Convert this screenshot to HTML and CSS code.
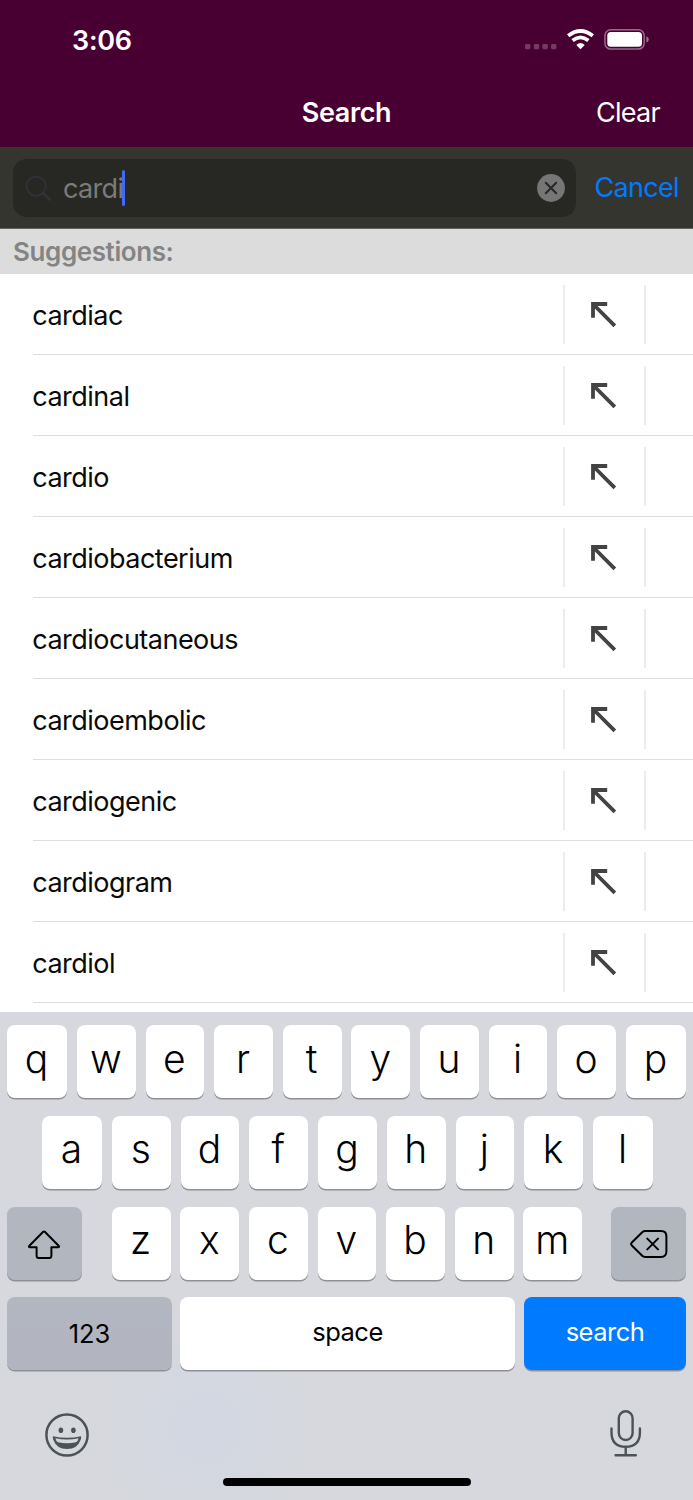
FILE: index.html
```
<!DOCTYPE html>
<html lang="en">
<head>
<meta charset="utf-8">
<title>Search</title>
<link rel="stylesheet" href="styles.css">
</head>
<body>
<svg class="defs" aria-hidden="true">
  <symbol id="insert" viewBox="0 0 26 26"><path d="M2 15.800V2H16.200M2 2L23.800 23.800" fill="none" stroke="#434343" stroke-width="3.800"/></symbol>
</svg>
<header class="header">
  <div class="status">
    <span class="time">3:06</span>
    <svg class="status-icons" viewBox="0 0 126 24" width="126" height="24">
      <g fill="#fff" fill-opacity=".23"><rect y="16" width="5.4" height="5.2" rx="1.4"/><rect x="8.8" y="16" width="5.4" height="5.2" rx="1.4"/><rect x="17.4" y="16" width="5.4" height="5.2" rx="1.4"/><rect x="26" y="16" width="5.4" height="5.2" rx="1.4"/></g>
      <g fill="none" stroke="#fff" stroke-width="3.7"><path d="M43.2 7.7Q55.5-1.7 67.8 7.7"/><path d="M47.6 12.5Q55.5 6.3 63.4 12.5"/></g>
      <path d="M55.5 21.2L51.3 17Q55.5 13.2 59.7 17Z" fill="#fff"/>
      <rect x="79.9" y="1.8" width="39.3" height="19.3" rx="5.8" fill="none" stroke="#fff" stroke-opacity=".42" stroke-width="1.5"/>
      <rect x="82.3" y="4" width="34.7" height="14.8" rx="3.6" fill="#fff"/>
      <path d="M121.3 8.2Q123.8 9.2 123.8 11.4T121.3 14.6Z" fill="#fff" fill-opacity=".45"/>
    </svg>
  </div>
  <nav class="nav"><span></span><h1 class="title">Search</h1><span class="clear">Clear</span></nav>
</header>
<div class="searchbar">
  <div class="field">
    <svg class="magnifier" width="27" height="27" viewBox="0 0 27 27"><g fill="none" stroke="#32323a" stroke-linecap="round"><circle cx="11.2" cy="11.2" r="9.6" stroke-width="1.8"/><path d="M18.3 18.3L24.6 24.6" stroke-width="2.5"/></g></svg>
    <span class="query">cardi</span><span class="caret"></span>
    <svg class="reset" width="28" height="28" viewBox="0 0 28 28"><circle cx="14" cy="14" r="13.9" fill="#767676"/><path d="M8.8 8.8L19.2 19.2M19.2 8.8L8.8 19.2" stroke="#272824" stroke-width="2" stroke-linecap="round"/></svg>
  </div>
  <span class="cancel">Cancel</span>
</div>
<h2 class="section">Suggestions:</h2>
<ul class="list">
  <li class="row"><span class="word">cardiac</span><span class="insert"><svg><use href="#insert"/></svg></span></li>
  <li class="row"><span class="word">cardinal</span><span class="insert"><svg><use href="#insert"/></svg></span></li>
  <li class="row"><span class="word">cardio</span><span class="insert"><svg><use href="#insert"/></svg></span></li>
  <li class="row"><span class="word">cardiobacterium</span><span class="insert"><svg><use href="#insert"/></svg></span></li>
  <li class="row"><span class="word">cardiocutaneous</span><span class="insert"><svg><use href="#insert"/></svg></span></li>
  <li class="row"><span class="word">cardioembolic</span><span class="insert"><svg><use href="#insert"/></svg></span></li>
  <li class="row"><span class="word">cardiogenic</span><span class="insert"><svg><use href="#insert"/></svg></span></li>
  <li class="row"><span class="word">cardiogram</span><span class="insert"><svg><use href="#insert"/></svg></span></li>
  <li class="row"><span class="word">cardiol</span><span class="insert"><svg><use href="#insert"/></svg></span></li>
</ul>
<section class="keyboard">
  <div class="keys"><span class="key edge">q</span><span class="key">w</span><span class="key">e</span><span class="key">r</span><span class="key">t</span><span class="key">y</span><span class="key">u</span><span class="key">i</span><span class="key">o</span><span class="key edge">p</span></div>
  <div class="keys inset"><span class="key edge">a</span><span class="key">s</span><span class="key">d</span><span class="key">f</span><span class="key">g</span><span class="key">h</span><span class="key">j</span><span class="key">k</span><span class="key edge">l</span></div>
  <div class="keys">
    <span class="key dark shift"><svg width="34" height="30" viewBox="0 0 34 30"><path d="M16.2 1.8Q17 1 17.8 1.8L31.6 15.7Q32.7 17.2 31 17.2H24.4V25.8Q24.4 28 22.2 28H11.8Q9.6 28 9.6 25.8V17.2H3Q1.3 17.2 2.4 15.7Z" fill="none" stroke="#000" stroke-width="2" stroke-linejoin="round"/></svg></span>
    <div class="letters"><span class="key">z</span><span class="key">x</span><span class="key">c</span><span class="key">v</span><span class="key">b</span><span class="key">n</span><span class="key">m</span></div>
    <span class="key dark delete"><svg width="38" height="28" viewBox="0 0 38 28"><path d="M15.2 1H31Q36.4 1 36.4 6.4V21.6Q36.4 27 31 27H15.2Q13.5 27 12.2 25.8L1.6 15.2Q.6 14 1.6 12.8L12.2 2.2Q13.5 1 15.2 1ZM17.3 8.6L28 19.4M28 8.6L17.3 19.4" fill="none" stroke="#000" stroke-width="2" stroke-linecap="round" stroke-linejoin="round"/></svg></span>
  </div>
  <div class="keys"><span class="key label numbers">123</span><span class="key label space">space</span><span class="key label go">search</span></div>
  <div class="dock">
    <svg class="emoji" width="44" height="44" viewBox="0 0 44 44"><circle cx="22" cy="22" r="20.6" fill="none" stroke="#4b5357" stroke-width="2.5"/><ellipse cx="15.9" cy="17.2" rx="2.3" ry="2.8" fill="#4b5357"/><ellipse cx="28.4" cy="17.2" rx="2.3" ry="2.8" fill="#4b5357"/><path d="M8 23.2Q22 26.2 36 23.2Q36.500 24 35.800 26.400Q32.500 36 22 36Q11.500 36 8.200 26.400Q7.500 24 8 23.200Z" fill="#4b5357"/><path d="M10.400 25.200Q22 27.600 33.600 25.200Q33 28.200 31 29.200Q22 31.200 13 29.200Q11 28.200 10.400 25.200Z" fill="#d5d7dd"/></svg>
    <svg width="32" height="47" viewBox="0 0 32 47"><g fill="none" stroke="#4b5357" stroke-width="2.4" stroke-linecap="round"><rect x="8.800" y="1.300" width="13.800" height="28.700" rx="6.900"/><path d="M1.500 18.500V22.500Q1.500 36.800 15.700 36.800T29.900 22.500V18.500M15.700 37V45M5.600 45.300H25.800"/></g></svg>
  </div>
  <div class="home"></div>
</section>
</body>
</html>
```
FILE: styles.css
```
* { box-sizing: border-box; }
body {
  margin: 0;
  width: 693px;
  height: 1500px;
  overflow: hidden;
  display: flex;
  flex-direction: column;
  background: #fff;
  color: #0a0a0a;
  font-family: Inter, "Liberation Sans", sans-serif;
  font-size: 27px;
  letter-spacing: -0.5px;
}
.defs { display: none; }
svg { display: block; flex: none; }
.header { height: 147px; background: #480032; color: #fff; }
.status {
  height: 78px;
  padding: 0 42px 0 72px;
  display: flex;
  align-items: center;
  justify-content: space-between;
}
.time { font-weight: 600; letter-spacing: -0.3px; padding-top: 2px; }
.status-icons { margin-top: 1px; }
.nav {
  height: 69px;
  padding-right: 33px;
  display: grid;
  grid-template-columns: 240px 213px 1fr;
  align-items: center;
}
.title { margin: 0; font-size: 27px; font-weight: 600; letter-spacing: -0.4px; text-align: center; }
.clear { text-align: right; letter-spacing: -0.700px; }
.searchbar {
  height: 82px;
  display: flex;
  align-items: center;
  padding: 0 0 0 13px;
  background: #353530;
  border-bottom: 1px solid #62625f;
  border-top: 1px solid #413034;
}
.field {
  width: 563px;
  height: 58px;
  border-radius: 14px;
  background: #272824;
  display: flex;
  align-items: center;
  padding: 0 11px 0 12px;
}
.magnifier { margin-right: 11px; }
.query { color: #7b7b79; padding-top: 1px; letter-spacing: -0.650px; }
.caret { width: 3.500px; height: 36px; border-radius: 2px; background: #4169f2; margin: 0 auto 0 -1.500px; }
.cancel { margin-left: 18.500px; padding-bottom: 2px; letter-spacing: -0.700px; color: #007aff; }
.section {
  margin: 0;
  height: 45px;
  padding: 0 13px;
  background: #dcdcdc;
  color: #848484;
  font-size: 26px;
  font-weight: 600;
  letter-spacing: -0.400px;
  line-height: 45px;
}
.list { list-style: none; margin: 0; padding: 0 0 0 33px; height: 738px; }
.row {
  height: 81px;
  display: flex;
  align-items: center;
  border-bottom: 1px solid #dedede;
}
.word { width: 530px; padding-top: 2px; margin-left: -0.700px; margin-right: 0.700px; letter-spacing: -0.520px; }
.insert {
  width: 83px;
  height: 59px;
  padding: 17px 0 0 26px;
  border: solid #ececec;
  border-width: 0 2px;
}
.insert svg { width: 26px; height: 26px; }
.keyboard {
  height: 488px;
  padding: 13px 7px 0;
  background: radial-gradient(circle at 205px 415px, #d3d7e1 0, #d3d7e1 30px, #d6d8dd 105px);
  color: #000;
}
.keys { display: flex; justify-content: space-between; height: 73px; margin-bottom: 17.800px; }
.inset { padding: 0 33px 0 35px; }
.key {
  width: 58.700px;
  height: 73px;
  padding: 0 1px 7px 0;
  display: flex;
  align-items: center;
  justify-content: center;
  border-radius: 8px;
  background: #fff;
  box-shadow: 0 1.500px 0 #8f9195;
  font-size: 39px;
  font-weight: 350;
  letter-spacing: 0;
}
.edge { width: 60px; }
.letters { width: 470.300px; margin-left: 1px; display: flex; justify-content: space-between; }
.dark { width: 75px; background: #b2b6bf; }
.shift { padding: 3px 1px 0 0; }
.delete { padding: 2px 0 0 1px; }
.label { font-size: 25.500px; font-weight: 400; padding: 0 0 4px; letter-spacing: -0.500px; }
.numbers { width: 165px; padding-bottom: 0; letter-spacing: 0; background: linear-gradient(#b2b7c0, #b2b4c0); }
.space { width: 335px; margin-left: -1px; }
.go { width: 162px; background: #007aff; color: #fff; }
.dock {
  height: 90px;
  padding: 22px 44px 0 38px;
  display: flex;
  justify-content: space-between;
}
.emoji { margin-top: 3px; }
.home { width: 248px; height: 8px; margin: 0 auto; border-radius: 4px; background: #000; }
```
